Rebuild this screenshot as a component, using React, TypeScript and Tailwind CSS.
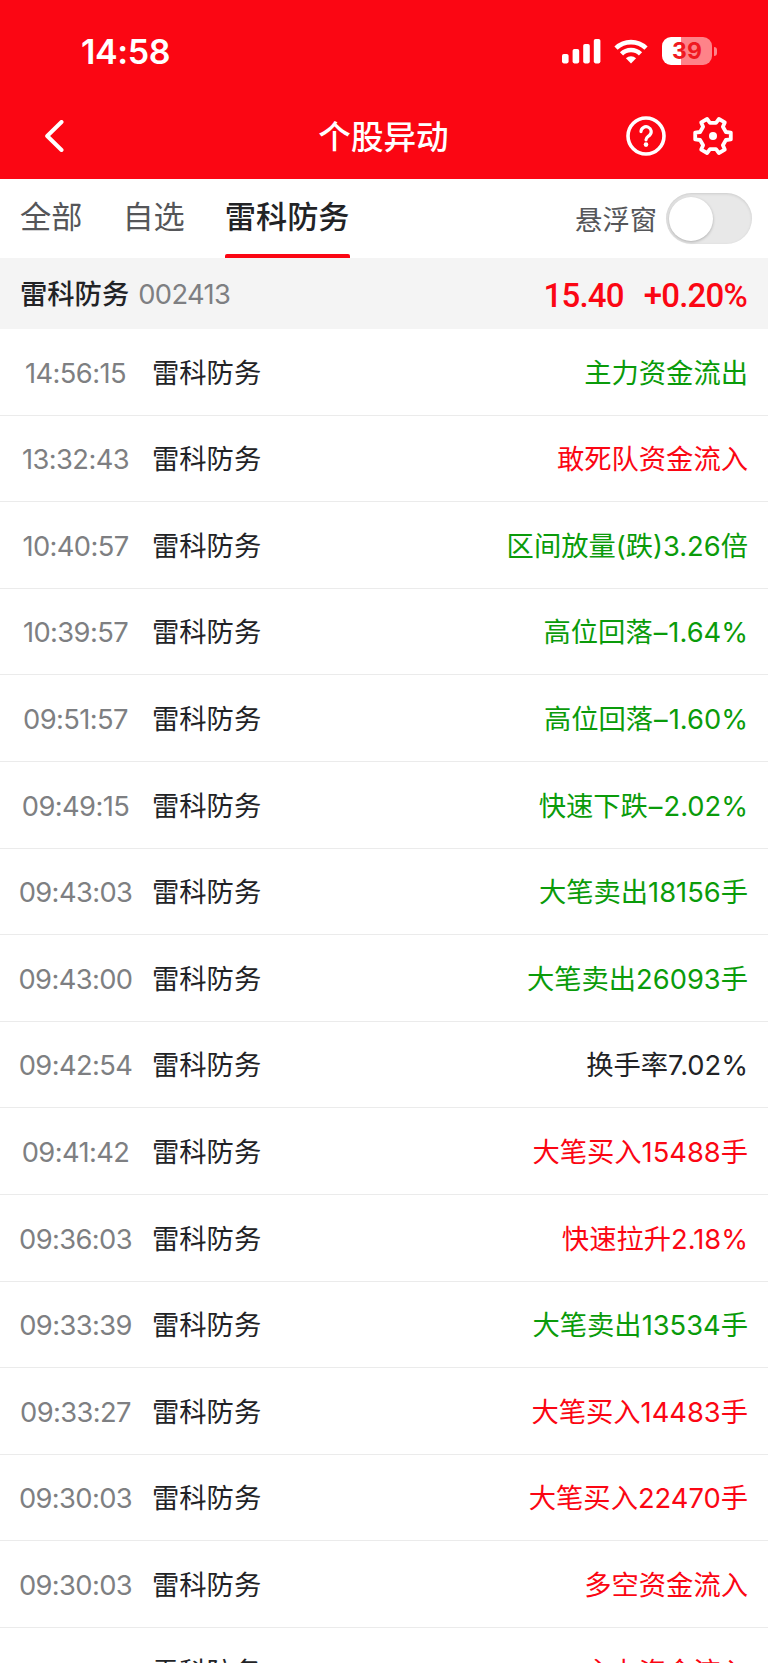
type Tone = "green" | "red" | "black";

const NAME = "雷科防务";

const rows: { time?: string; text: string; change?: string; tone: Tone }[] = [
  { time: "14:56:15", text: "主力资金流出", tone: "green" },
  { time: "13:32:43", text: "敢死队资金流入", tone: "red" },
  { time: "10:40:57", text: "区间放量(跌)3.26倍", tone: "green" },
  { time: "10:39:57", text: "高位回落", change: "1.64%", tone: "green" },
  { time: "09:51:57", text: "高位回落", change: "1.60%", tone: "green" },
  { time: "09:49:15", text: "快速下跌", change: "2.02%", tone: "green" },
  { time: "09:43:03", text: "大笔卖出18156手", tone: "green" },
  { time: "09:43:00", text: "大笔卖出26093手", tone: "green" },
  { time: "09:42:54", text: "换手率7.02%", tone: "black" },
  { time: "09:41:42", text: "大笔买入15488手", tone: "red" },
  { time: "09:36:03", text: "快速拉升2.18%", tone: "red" },
  { time: "09:33:39", text: "大笔卖出13534手", tone: "green" },
  { time: "09:33:27", text: "大笔买入14483手", tone: "red" },
  { time: "09:30:03", text: "大笔买入22470手", tone: "red" },
  { time: "09:30:03", text: "多空资金流入", tone: "red" },
  { text: "主力资金流入", tone: "red" },
];

const toneClass: Record<Tone, string> = {
  green: "text-[#0a9b0a]",
  red: "text-[#fb0613]",
  black: "text-[#222326]",
};

function StatusBar() {
  return (
    <div className="flex h-[102px] items-center justify-between pl-[81px] pr-[51px]">
      <span className="pt-[1px] text-[34px] leading-none font-semibold tracking-[-0.4px]">14:58</span>
      <div className="flex items-center">
        <svg className="h-[26px] w-[39px]" viewBox="0 0 39 26" fill="currentColor">
          <rect x="0" y="16" width="6.6" height="9.4" rx="1.8" />
          <rect x="10.6" y="11" width="6.6" height="14.4" rx="1.8" />
          <rect x="21.2" y="6" width="6.6" height="19.4" rx="1.8" />
          <rect x="31.8" y="1" width="6.6" height="24.4" rx="1.8" />
        </svg>
        <svg className="ml-[13px] h-[26px] w-[34px]" viewBox="0 0 34 26" fill="none" stroke="currentColor" strokeWidth="4.6">
          <path d="M2 10.2a21.5 21.5 0 0 1 30 0" />
          <path d="M7.5 15.9a13.6 13.6 0 0 1 19 0" />
          <path d="M17 25.4l-5.1-5.1a7.4 7.4 0 0 1 10.2 0z" fill="currentColor" stroke="none" />
        </svg>
        <div className="ml-[14px] flex h-[28px] w-[50px] items-center justify-center rounded-[9px] bg-[linear-gradient(90deg,#fff_0_19px,#fe8389_19px)] text-[23px] leading-none font-bold text-[#f01820]">
          39
        </div>
        <div className="ml-[2px] h-[9px] w-[3px] rounded-r-full bg-[#fe8389]" />
      </div>
    </div>
  );
}

function NavBar() {
  return (
    <div className="flex h-[77px] items-center justify-between pb-[10px] pl-[45px] pr-[35px]">
      <div className="flex w-[96px]">
        <svg className="h-[32px] w-[19px]" viewBox="0 0 19 32" fill="none" stroke="currentColor" strokeWidth="4" strokeLinecap="round" strokeLinejoin="round">
          <path d="M16.5 2L2.2 16l14.3 14" />
        </svg>
      </div>
      <h1 className="pt-[3px] text-[32.6px] leading-none font-medium">个股异动</h1>
      <div className="flex w-[107px] justify-between">
        <svg className="h-[40px] w-[40px]" viewBox="0 0 40 40" fill="none" stroke="currentColor" strokeLinecap="round">
          <circle cx="20" cy="20" r="18" strokeWidth="3.6" />
          <path d="M15 15.6a5.1 4.9 0 1 1 8.6 3.6c-2 1.8-3.6 2.4-3.6 4.6" strokeWidth="3.2" />
          <circle cx="20" cy="28.6" r="2.3" fill="currentColor" stroke="none" />
        </svg>
        <svg className="h-[40px] w-[40px]" viewBox="0 0 40 40" fill="none" stroke="currentColor" strokeWidth="3.8" strokeLinejoin="round">
          <path d="M2.2 16.6L7.1 16L10.1 10.8L8.2 6.4L14.1 3L17 6.8H23L25.9 3L31.8 6.4L29.9 10.8L32.9 16L37.8 16.6V23.4L32.9 24L29.9 29.2L31.8 33.6L25.9 37L23 33.2H17L14.1 37L8.2 33.6L10.1 29.2L7.1 24L2.2 23.4Z" />
          <circle cx="20" cy="20" r="4" fill="currentColor" stroke="none" />
        </svg>
      </div>
    </div>
  );
}

function Tabs() {
  return (
    <div className="flex h-[79px] items-stretch justify-between bg-white pl-[20px] pr-[16px] text-[#555659]">
      <div className="flex text-[31.2px] leading-none">
        <span className="mr-[40px] pt-[23px]">全部</span>
        <span className="mr-[40px] pt-[23px]">自选</span>
        <div className="flex flex-col justify-between font-medium text-[#222326]">
          <span className="pt-[23px]">{NAME}</span>
          <div className="h-[4px] w-[125px] rounded-t-[2px] bg-[#fb0613]" />
        </div>
      </div>
      <div className="flex items-center">
        <span className="mr-[9px] pt-[4px] text-[27.3px] leading-none">悬浮窗</span>
        <div className="flex h-[51px] w-[86px] items-center rounded-full bg-[#e8e8e8] px-[3px] shadow-[inset_0_1px_3px_rgba(0,0,0,0.12)]">
          <div className="h-[44px] w-[44px] rounded-full bg-white shadow-[0_1px_3px_rgba(0,0,0,0.25)]" />
        </div>
      </div>
    </div>
  );
}

function Quote() {
  return (
    <div className="flex h-[71px] items-center justify-between bg-[#f4f4f4] pl-[20px] pr-[21px] leading-none">
      <div className="flex items-center pt-[2px] text-[27.3px]">
        <span className="font-medium text-[#222326]">{NAME}</span>
        <span className="ml-[9px] tracking-[-0.6px] text-[#7e7f82]">002413</span>
      </div>
      <div className="flex gap-[20px] pt-[3px] font-['Roboto'] text-[33px] font-medium tracking-[-0.8px] text-[#fb0613]">
        <span>15.40</span>
        <span>+0.20%</span>
      </div>
    </div>
  );
}

export default function App() {
  return (
    <div className="flex h-[1663px] w-[768px] flex-col overflow-hidden bg-white font-['Inter','Noto_Sans_CJK_SC',sans-serif]">
      <header className="shrink-0 bg-[#fb0613] text-white">
        <StatusBar />
        <NavBar />
      </header>
      <div className="shrink-0">
        <Tabs />
        <Quote />
      </div>
      <ul className="shrink-0 text-[27.3px] leading-none">
        {rows.map((row, i) => (
          <li key={i} className="flex h-[86.6px] items-center border-b border-[#ebebeb] pt-[3px] pr-[20px]">
            <span className="w-[152px] pr-[1px] text-center tracking-[-0.6px] text-[#7e7f82]">{row.time}</span>
            <span className="text-[#222326]">{NAME}</span>
            <span className={`ml-auto ${toneClass[row.tone]}`}>
              {row.text}
              {row.change && <span className="px-[1px]">–</span>}
              {row.change}
            </span>
          </li>
        ))}
      </ul>
    </div>
  );
}
